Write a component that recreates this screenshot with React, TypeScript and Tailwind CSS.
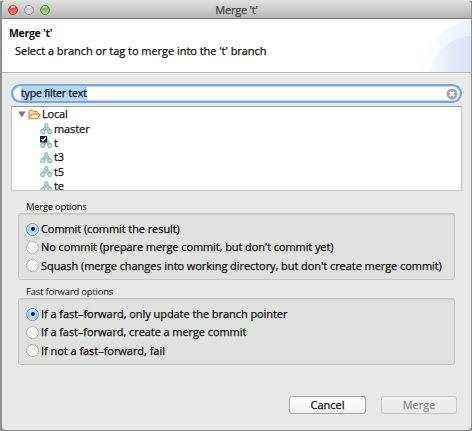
import React from "react";

const branches = [
  { name: "master", checked: false },
  { name: "t", checked: true },
  { name: "t3", checked: false },
  { name: "t5", checked: false },
  { name: "te", checked: false },
];

function Light({ className }: { className: string }) {
  return (
    <span className={"relative block h-[10px] w-[10px] rounded-full border " + className}>
      <span className="absolute left-[2px] top-0 h-[2px] w-[4px] rounded-full bg-white/80" />
    </span>
  );
}

function BranchIcon({ checked }: { checked: boolean }) {
  return (
    <svg width="13" height="13" viewBox="0 0 13 13" className="shrink-0">
      <g stroke="#7ea9ad" strokeWidth=".9" fill="#bfe0e2">
        <path d="M4.9 4.5 1.8 8.4h3.4l1.1-1.8 1.1 1.8h3.4L7.9 4.5Z" />
        <rect x="4.9" y="1.5" width="2.9" height="4.4" rx="1.2" />
        <circle cx="2.8" cy="9.6" r="2.2" />
        <circle cx="9.9" cy="9.6" r="2.2" />
      </g>
      {checked && (
        <g>
          <rect x="0" y="0" width="7" height="6.5" fill="#1c1c1c" />
          <path d="M1.5 3 3 4.7 5.8 1.3" fill="none" stroke="#fff" strokeWidth="1.3" />
        </g>
      )}
    </svg>
  );
}

function Radio({ label, on, tracking }: { label: string; on?: boolean; tracking: string }) {
  return (
    <div className="flex h-[18.3px] items-center">
      <span
        className={
          "flex h-[13px] w-[13px] shrink-0 items-center justify-center rounded-full border " +
          (on
            ? "border-[#7896b8] bg-linear-to-b from-[#e4f1fd] via-[#9ccbf5] to-[#c7e9ff]"
            : "border-[#b0b2b0] bg-linear-to-b from-white via-[#f0f1f0] to-white")
        }
      >
        {on && <span className="h-[4px] w-[4px] rounded-full bg-[#10213a]" />}
      </span>
      <span className={"ml-[2px] whitespace-nowrap " + tracking}>{label}</span>
    </div>
  );
}

export default function App() {
  return (
    <div className="flex h-[431px] w-[472px] flex-col overflow-hidden bg-[#8e908e] pl-[2px] pr-[1px] pb-[1px] font-['Open_Sans','Lucida_Grande',sans-serif] text-[11px] font-medium leading-[14px] text-[#111] [-webkit-text-stroke:0.25px]">
      <div className="-ml-[2px] -mr-[1px] h-px shrink-0 bg-[#dfe1df]" />
      <div className="flex min-h-0 flex-1 flex-col overflow-hidden rounded-[4px] bg-[#e7e9e6]">
        <div className="grid h-[18px] shrink-0 grid-cols-[60px_1fr_60px] items-center border-b border-[#777977] bg-linear-to-b from-[#dedfdd] to-[#b5b7b5]">
          <div className="flex gap-[6px] pl-[6px]">
            <Light className="border-[#a83a38] bg-linear-to-b from-[#d93c39] to-[#ff7d76]" />
            <Light className="border-[#959795] bg-linear-to-b from-[#b8bab8] to-[#e2e3e2]" />
            <Light className="border-[#558643] bg-linear-to-b from-[#66a84e] to-[#aee087]" />
          </div>
          <div className="text-center tracking-[-0.2px] text-[#454745]">Merge 't'</div>
        </div>
        <div className="relative h-[54px] shrink-0 overflow-hidden border-b border-[#b5b7b4] bg-white">
          <svg className="absolute right-0 top-0" width="60" height="53" viewBox="0 0 60 53">
            <defs>
              <linearGradient id="arc" x1="0" x2="1">
                <stop offset="0" stopColor="#ffffff" />
                <stop offset=".5" stopColor="#f4f8fe" />
                <stop offset="1" stopColor="#e9f0fb" />
              </linearGradient>
              <linearGradient id="disc" x1="0" x2="1">
                <stop offset="0" stopColor="#f0f3fc" stopOpacity=".4" />
                <stop offset=".5" stopColor="#e4eaf8" />
                <stop offset="1" stopColor="#dce4f5" />
              </linearGradient>
            </defs>
            <path d="M4 53C13 27 32 6 60 1v52Z" fill="url(#arc)" />
            <path d="M19 53C21 35 38 18 60 17v36Z" fill="url(#disc)" />
          </svg>
          <div className="pl-[7px] pt-[7px] text-[10.5px] font-bold tracking-[-0.3px] [-webkit-text-stroke:0px]">Merge 't'</div>
          <div className="pl-[13px] pt-[4px] tracking-[-0.04px]">Select a branch or tag to merge into the 't' branch</div>
        </div>
        <div className="flex flex-col pl-[9px] pr-[9px] pt-[11px]">
          <div className="flex h-[19px] items-center justify-between rounded-full border-2 border-[#78a8d8] bg-white pl-[8px] pr-[2px] shadow-[inset_0_0_1px_1px_#b7d4ef]">
            <span className="h-[13px] bg-[#b3d5f7] text-[10.5px] leading-[13px] tracking-[-0.17px]">type filter text</span>
            <svg width="12" height="12" viewBox="0 0 12 12">
              <circle cx="6" cy="6" r="5.5" fill="#a5a7a5" />
              <path d="m3.8 3.8 4.4 4.4m0-4.4L3.8 8.2" stroke="#fff" strokeWidth="1.7" />
            </svg>
          </div>
          <div className="mt-[3px] h-[85px] overflow-hidden border border-[#c4c6c3] border-t-[#989a98] bg-white">
            <div className="flex h-[14.4px] items-center pl-[6px]">
              <svg width="8" height="7" viewBox="0 0 8 7">
                <path d="M.3.5h7.2L3.9 6.5Z" fill="#777977" />
              </svg>
              <svg className="ml-[2px]" width="13" height="11" viewBox="0 0 13 11">
                <path d="M1 9.5V2.2l1-1h2.6l1 1.2H9l.8.8v2" fill="#fae1a2" stroke="#ba7c38" />
                <path d="M1 9.8 3.8 5h8.5L9.5 9.8Z" fill="#ffe9b0" stroke="#c48a40" />
              </svg>
              <span className="ml-[1px] tracking-[-0.2px]">Local</span>
            </div>
            {branches.map((b) => (
              <div key={b.name} className="flex h-[14.4px] items-center pl-[28px]">
                <BranchIcon checked={b.checked} />
                <span className="ml-[1px] tracking-[-0.1px]">{b.name}</span>
              </div>
            ))}
          </div>
        </div>
        <div className="pl-[16px] pr-[16px]">
          <div className="mt-[9px] pl-[8px] text-[9.5px] leading-[13px] tracking-[-0.28px] [-webkit-text-stroke:0px]">Merge options</div>
          <div className="h-[67px] rounded-[3px] border border-[#c3c5c2] bg-[#dfe1de] pl-[7px] pt-[6px] shadow-[inset_0_1px_1px_#cfd1ce]">
            <Radio on label="Commit (commit the result)" tracking="tracking-[-0.08px]" />
            <Radio label="No commit (prepare merge commit, but don't commit yet)" tracking="tracking-[-0.09px]" />
            <Radio label="Squash (merge changes into working directory, but don't create merge commit)" tracking="tracking-[-0.065px]" />
          </div>
          <div className="mt-[5px] pl-[8px] text-[9.5px] leading-[13px] tracking-[-0.22px] [-webkit-text-stroke:0px]">Fast forward options</div>
          <div className="h-[67px] rounded-[3px] border border-[#c3c5c2] bg-[#dfe1de] pl-[7px] pt-[6px] shadow-[inset_0_1px_1px_#cfd1ce]">
            <Radio on label="If a fast–forward, only update the branch pointer" tracking="tracking-[-0.06px]" />
            <Radio label="If a fast–forward, create a merge commit" tracking="tracking-[-0.075px]" />
            <Radio label="If not a fast–forward, fail" tracking="tracking-[-0.04px]" />
          </div>
        </div>
        <div className="mt-[31px] flex justify-end gap-[15px] pr-[14px]">
          <button className="h-[18px] w-[77px] rounded-[3px] border border-[#a4a6a4] bg-linear-to-b from-white to-[#f0f1f0] leading-[14px]">Cancel</button>
          <button className="h-[18px] w-[76px] rounded-[3px] border border-[#c5c7c4] bg-linear-to-b from-[#f0f1ef] to-[#e7e9e6] leading-[14px] text-[#909290]">Merge</button>
        </div>
      </div>
    </div>
  );
}
